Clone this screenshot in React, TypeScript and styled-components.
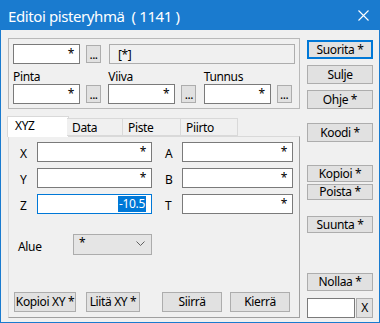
import * as React from 'react';
import styled, { createGlobalStyle } from 'styled-components';

const GlobalStyle = createGlobalStyle`
    html, body {
        margin: 0;
        padding: 0;
        background: #ffffff;
    }
    * {
        box-sizing: border-box;
    }
`;

const Window = styled.div`
    width: 380px;
    height: 323px;
    background: #1a7bcf;
    padding: 0 1px 1px 1px;
    display: flex;
    flex-direction: column;
    font-family: "Noto Sans", "Open Sans", sans-serif;
    font-size: 12px;
    letter-spacing: -0.35px;
    color: #000;
`;

const TitleBar = styled.div`
    height: 30px;
    display: flex;
    align-items: center;
    justify-content: space-between;
    padding: 1px 10px 0 7px;
    color: #ffffff;
    font-size: 15px;
    letter-spacing: -0.4px;
    white-space: pre;
`;

const Body = styled.div`
    flex: 1;
    background: #f0f0f0;
    display: flex;
    padding: 8px 0 4px 7px;
`;

const LeftCol = styled.div`
    width: 292px;
    display: flex;
    flex-direction: column;
`;

const RightCol = styled.div`
    width: 66px;
    margin-left: 7px;
    display: flex;
    flex-direction: column;
`;

const GroupBox = styled.div`
    height: 71px;
    border: 1px solid #b9b9b9;
    padding: 5px 0 0 4px;
`;

const Row = styled.div<{ $gap?: number }>`
    display: flex;
    align-items: center;
    gap: ${p => p.$gap ?? 0}px;
`;

const TextBox = styled.div<{ $w: number; $focus?: boolean }>`
    width: ${p => p.$w}px;
    height: 20px;
    background: #ffffff;
    border: 1px solid ${p => (p.$focus ? '#0078d7' : '#7a7a7a')};
    display: flex;
    align-items: center;
    justify-content: flex-end;
    padding: 0 5px 0 3px;
    line-height: 16px;
`;

const ReadOnlyBox = styled.div<{ $w: number }>`
    width: ${p => p.$w}px;
    height: 20px;
    background: #f0f0f0;
    border: 1px solid #adadad;
    display: flex;
    align-items: center;
    padding: 0 8px;
`;

const Selected = styled.span`
    background: #0078d7;
    color: #ffffff;
    padding: 0 1px;
`;

const DotsButton = styled.div`
    width: 15px;
    height: 18px;
    background: #e1e1e1;
    border: 1px solid #adadad;
    display: flex;
    align-items: flex-end;
    justify-content: center;
    padding-bottom: 2px;
    line-height: 10px;
    letter-spacing: -0.5px;
`;

const FieldCell = styled.div`
    width: 96px;
    display: flex;
    flex-direction: column;
`;

const FieldLabel = styled.div`
    height: 14px;
    line-height: 14px;
    margin-top: 6px;
`;

const TabStrip = styled.div`
    margin-top: 7px;
    height: 20px;
    display: flex;
    align-items: flex-end;
    padding-left: 1px;
    position: relative;
    z-index: 1;
`;

const Tab = styled.div<{ $w: number; $active?: boolean }>`
    width: ${p => p.$w}px;
    height: ${p => (p.$active ? 21 : 18)}px;
    margin: ${p => (p.$active ? '0 -2px -1px -2px' : '0')};
    background: ${p => (p.$active ? '#ffffff' : '#f0f0f0')};
    border: 1px solid #d9d9d9;
    border-bottom: ${p => (p.$active ? 'none' : '1px solid #d9d9d9')};
    border-left: ${p => (p.$active ? '1px solid #d9d9d9' : 'none')};
    padding: ${p => (p.$active ? '1px 0 0 7px' : '1px 0 0 5px')};
    line-height: 15px;
    &:first-child {
        border-left: 1px solid #d9d9d9;
    }
`;

const Panel = styled.div`
    flex: 1;
    border: 1px solid #a0a0a0;
    border-top-color: #d9d9d9;
    border-left-color: #d9d9d9;
    padding: 5px 0 5px 11px;
    display: flex;
    flex-direction: column;
`;

const CoordGrid = styled.div`
    display: grid;
    grid-template-columns: 17px 115px 13px 17px 111px;
    grid-auto-rows: 20px;
    row-gap: 6px;
    align-items: center;
`;

const CoordLabel = styled.div<{ $col?: number }>`
    grid-column: ${p => p.$col ?? 'auto'};
    padding-top: 3px;
`;

const AlueRow = styled.div`
    margin-top: 20px;
    margin-left: -2px;
    display: flex;
    align-items: center;
`;

const AlueLabel = styled.div`
    width: 55px;
    padding-top: 4px;
`;

const Combo = styled.div`
    width: 79px;
    height: 21px;
    background: #e5e5e5;
    border: 1px solid #acacac;
    display: flex;
    align-items: flex-start;
    justify-content: space-between;
    padding: 1px 6px 0 5px;
    line-height: 14px;
`;

const ComboArrow = styled.svg`
    margin-top: 5px;
`;

const BottomRow = styled.div`
    margin-top: auto;
    margin-left: -6px;
    display: flex;
    align-items: center;
`;

const Button = styled.div<{ $w?: number; $h?: number; $mt?: number; $ml?: number; $default?: boolean }>`
    width: ${p => (p.$w ? `${p.$w}px` : '100%')};
    height: ${p => p.$h ?? 19}px;
    margin-top: ${p => p.$mt ?? 0}px;
    margin-left: ${p => p.$ml ?? 0}px;
    background: #e1e1e1;
    border: 1px solid ${p => (p.$default ? '#0078d7' : '#adadad')};
    box-shadow: ${p => (p.$default ? 'inset 0 0 0 1px #0078d7' : 'none')};
    display: flex;
    align-items: center;
    justify-content: center;
    white-space: nowrap;
    flex-shrink: 0;
    padding-bottom: 1px;
`;

const SmallBoxRow = styled.div`
    margin-top: 7px;
    display: flex;
    gap: 1px;
`;

const SmallInput = styled.div`
    width: 48px;
    height: 20px;
    background: #ffffff;
    border: 1px solid #7a7a7a;
`;

const CloseIcon = () => (
    <svg width="11" height="11" viewBox="0 0 11 11">
        <path d="M0.5 0.5 L10.5 10.5 M10.5 0.5 L0.5 10.5" stroke="#ffffff" strokeWidth="1.1" />
    </svg>
);

const fields = ['Pinta', 'Viiva', 'Tunnus'];

const App: React.FC = () => {
    return (
        <>
            <GlobalStyle />
            <Window>
                <TitleBar>
                    <span>Editoi pisteryhmä  ( 1141 )</span>
                    <CloseIcon />
                </TitleBar>
                <Body>
                    <LeftCol>
                        <GroupBox>
                            <Row>
                                <TextBox $w={67}>*</TextBox>
                                <DotsButton style={{ marginLeft: 6 }}>...</DotsButton>
                                <ReadOnlyBox $w={186} style={{ marginLeft: 8 }}>[*]</ReadOnlyBox>
                            </Row>
                            <Row>
                                {fields.map(f => (
                                    <FieldCell key={f}>
                                        <FieldLabel>{f}</FieldLabel>
                                        <Row $gap={6}>
                                            <TextBox $w={67}>*</TextBox>
                                            <DotsButton>...</DotsButton>
                                        </Row>
                                    </FieldCell>
                                ))}
                            </Row>
                        </GroupBox>

                        <TabStrip>
                            <Tab $w={62} $active>XYZ</Tab>
                            <Tab $w={56}>Data</Tab>
                            <Tab $w={58}>Piste</Tab>
                            <Tab $w={57}>Piirto</Tab>
                        </TabStrip>
                        <Panel>
                            <CoordGrid>
                                <CoordLabel>X</CoordLabel>
                                <TextBox $w={115}>*</TextBox>
                                <CoordLabel $col={4}>A</CoordLabel>
                                <TextBox $w={111}>*</TextBox>

                                <CoordLabel>Y</CoordLabel>
                                <TextBox $w={115}>*</TextBox>
                                <CoordLabel $col={4}>B</CoordLabel>
                                <TextBox $w={111}>*</TextBox>

                                <CoordLabel>Z</CoordLabel>
                                <TextBox $w={115} $focus><Selected>-10.5</Selected></TextBox>
                                <CoordLabel $col={4}>T</CoordLabel>
                                <TextBox $w={111}>*</TextBox>
                            </CoordGrid>

                            <AlueRow>
                                <AlueLabel>Alue</AlueLabel>
                                <Combo>
                                    <span>*</span>
                                    <ComboArrow width="9" height="5" viewBox="0 0 9 5">
                                        <path d="M0.5 0.5 L4.5 4.5 L8.5 0.5" stroke="#606060" fill="none" />
                                    </ComboArrow>
                                </Combo>
                            </AlueRow>

                            <BottomRow>
                                <Button $w={62} $h={20}>Kopioi XY *</Button>
                                <Button $w={54} $h={20} $ml={10}>Liitä XY *</Button>
                                <Button $w={60} $h={20} $ml={22}>Siirrä</Button>
                                <Button $w={60} $h={20} $ml={8}>Kierrä</Button>
                            </BottomRow>
                        </Panel>
                    </LeftCol>

                    <RightCol>
                        <Button $mt={2} $default>Suorita *</Button>
                        <Button $mt={6}>Sulje</Button>
                        <Button $mt={6}>Ohje *</Button>
                        <Button $mt={14}>Koodi *</Button>
                        <Button $mt={23} $h={17}>Kopioi *</Button>
                        <Button $mt={2} $h={16}>Poista *</Button>
                        <Button $mt={16} $h={17}>Suunta *</Button>
                        <Button $mt={40} $h={18}>Nollaa *</Button>
                        <SmallBoxRow>
                            <SmallInput />
                            <Button $w={17} $h={20}>X</Button>
                        </SmallBoxRow>
                    </RightCol>
                </Body>
            </Window>
        </>
    );
};

export default App;
